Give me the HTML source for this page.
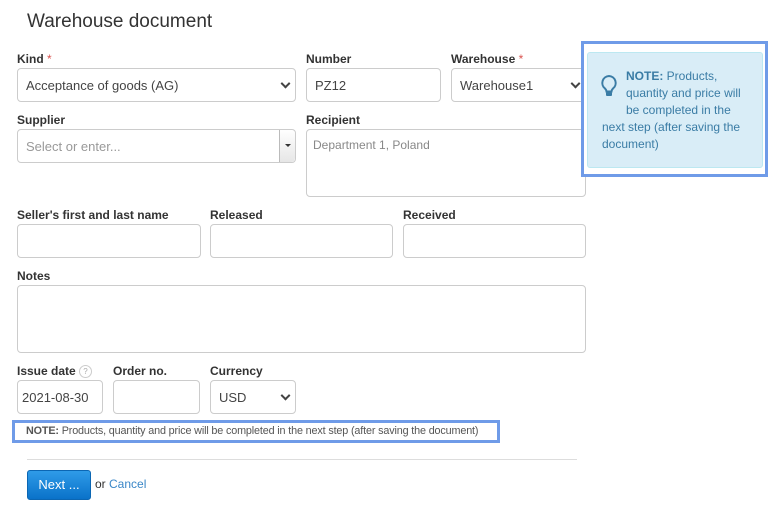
<!DOCTYPE html>
<html><head><style>
*{box-sizing:border-box;margin:0;padding:0}
body{width:773px;height:512px;background:#fff;font-family:"Liberation Sans",Arial,sans-serif;color:#333;position:relative;overflow:hidden}
.a{position:absolute}
.l{position:absolute;font-size:12px;font-weight:bold;color:#333}
.l i{color:#d9534f;font-style:normal;font-weight:normal}
.f{position:absolute;border:1px solid #ccc;border-radius:4px;background:#fff;font-size:13px;color:#444;padding:0 8px;display:flex;align-items:center}
.ch{position:absolute;right:6px;top:50%;width:7px;height:7px;border-right:2px solid #444;border-bottom:2px solid #444;transform:translateY(-70%) rotate(45deg)}
</style></head><body>
<div class="a" style="left:27px;top:11px;font-size:19px;color:#333">Warehouse document</div>

<div class="l" style="left:17px;top:52px">Kind <i>*</i></div>
<div class="f" style="left:17px;top:68px;width:279px;height:34px">Acceptance of goods (AG)<span class="ch"></span></div>
<div class="l" style="left:306px;top:52px">Number</div>
<div class="f" style="left:306px;top:68px;width:135px;height:34px">PZ12</div>
<div class="l" style="left:451px;top:52px">Warehouse <i>*</i></div>
<div class="f" style="left:451px;top:68px;width:135px;height:34px">Warehouse1<span class="ch"></span></div>

<div class="l" style="left:17px;top:113px">Supplier</div>
<div class="f" style="left:17px;top:129px;width:279px;height:34px;color:#999">Select or enter...
<div class="a" style="right:0;top:0;width:16px;height:32px;border-left:1px solid #bbb;background:linear-gradient(#fff,#e6e6e6);border-radius:0 4px 4px 0"><div class="a" style="left:5px;top:14px;border:3px solid transparent;border-top:3px solid #333;border-bottom:0;width:0"></div></div></div>
<div class="l" style="left:306px;top:113px">Recipient</div>
<div class="f" style="left:306px;top:129px;width:280px;height:68px;align-items:flex-start;padding-top:8px;padding-left:6px;font-size:12px;color:#888">Department 1, Poland</div>

<div class="l" style="left:17px;top:208px">Seller's first and last name</div>
<div class="f" style="left:17px;top:224px;width:184px;height:34px"></div>
<div class="l" style="left:210px;top:208px">Released</div>
<div class="f" style="left:210px;top:224px;width:183px;height:34px"></div>
<div class="l" style="left:403px;top:208px">Received</div>
<div class="f" style="left:403px;top:224px;width:183px;height:34px"></div>

<div class="l" style="left:17px;top:269px">Notes</div>
<div class="f" style="left:17px;top:285px;width:569px;height:68px"></div>

<div class="l" style="left:17px;top:364px">Issue date <span style="display:inline-block;width:13px;height:13px;border:1px solid #ccc;border-radius:50%;font-size:8px;color:#aaa;text-align:center;line-height:11px;font-weight:normal;vertical-align:middle">?</span></div>
<div class="f" style="left:17px;top:380px;width:86px;height:34px;padding:0 4px">2021-08-30</div>
<div class="l" style="left:113px;top:364px">Order no.</div>
<div class="f" style="left:113px;top:380px;width:87px;height:34px"></div>
<div class="l" style="left:210px;top:364px">Currency</div>
<div class="f" style="left:210px;top:380px;width:86px;height:34px">USD<span class="ch"></span></div>

<div class="a" style="left:12px;top:420px;width:488px;height:23px;border:3px solid #6f9be8;font-size:10.8px;color:#555;padding-left:11px;line-height:17px;white-space:nowrap;overflow:hidden;letter-spacing:-0.15px"><b>NOTE:</b> Products, quantity and price will be completed in the next step (after saving the document)</div>

<div class="a" style="left:27px;top:459px;width:550px;height:1px;background:#ddd"></div>
<div class="a" style="left:27px;top:470px;width:64px;height:30px;border-radius:3px;background:linear-gradient(#2f9be8,#0a72c9);border:1px solid #0b66b3;color:#fff;font-size:13px;text-align:center;line-height:28px">Next ...</div>
<div class="a" style="left:95px;top:477px;font-size:12px;color:#333">or <span style="color:#3a87c8">Cancel</span></div>

<div class="a" style="left:581px;top:41px;width:187px;height:136px;border:3px solid #6f9be8;background:#fff"></div>
<div class="a" style="left:587px;top:52px;width:176px;height:116px;background:#d9edf7;border:1px solid #bce8f1;border-radius:3px;font-size:12px;color:#3a7ca5;line-height:17px;padding:15px 0 0 14px">
<svg class="a" style="left:12px;top:21px" width="18" height="24" viewBox="0 0 18 24"><path d="M9 2a7 7 0 0 0-4 12.5c1 1 1.5 2 1.5 3h5c0-1 .5-2 1.5-3A7 7 0 0 0 9 2z" fill="none" stroke="#3a7ca5" stroke-width="2"/><rect x="6" y="18" width="6" height="4" rx="1" fill="#3a7ca5"/></svg>
<div style="padding-left:24px;width:150px"><b>NOTE:</b> Products, quantity and price will be completed in the</div>
<div>next step (after saving the document)</div>
</div>
</body></html>
